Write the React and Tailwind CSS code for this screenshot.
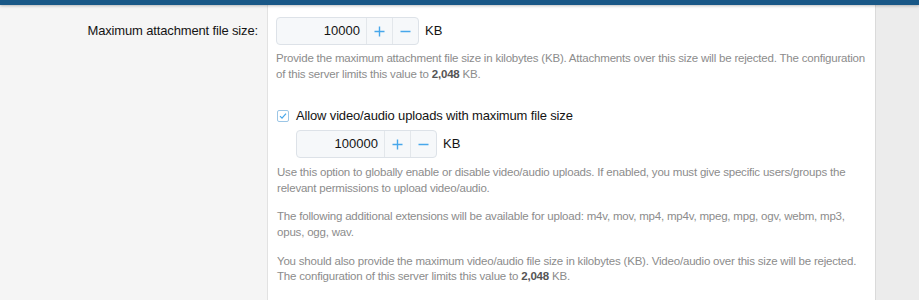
import React from "react";

function Spinner({ value, width }) {
  return (
    <div className="flex items-center">
      <div className="flex h-[28px] rounded-[4px] border border-[#dde2e8] bg-[#f6f8fa] overflow-hidden">
        <div
          className={`${width} flex items-center justify-end pr-[6px] text-[13px] text-[#141414]`}
        >
          {value}
        </div>
        <button className="w-[26px] flex items-center justify-center border-l border-[#e3e7eb]">
          <svg width="11" height="11" viewBox="0 0 11 11">
            <path d="M5.5 0.5v10M0.5 5.5h10" stroke="#47a7eb" strokeWidth="1.4" />
          </svg>
        </button>
        <button className="w-[26px] flex items-center justify-center border-l border-[#e3e7eb]">
          <svg width="11" height="11" viewBox="0 0 11 11">
            <path d="M0.5 5.5h10" stroke="#47a7eb" strokeWidth="1.4" />
          </svg>
        </button>
      </div>
      <span className="ml-[6px] text-[13px] text-[#141414]">KB</span>
    </div>
  );
}

function Hint({ children, className = "" }) {
  return (
    <p
      className={`text-[11.5px] leading-[15.6px] tracking-[-0.2px] text-[#8c8c8c] ${className}`}
    >
      {children}
    </p>
  );
}

export default function App() {
  return (
    <div
      className="w-[919px] h-[300px] overflow-hidden bg-white flex flex-col"
      style={{ fontFamily: '"Liberation Sans", Arial, sans-serif' }}
    >
      <div className="relative z-10 h-[5px] bg-[#195887] shadow-[0_1px_3px_rgba(0,0,0,0.25)]" />
      <div className="flex flex-1">
        <div className="flex-1 flex flex-col">
          {/* row 1 */}
          <div className="flex">
            <div className="w-[268px] shrink-0 bg-[#f5f5f5] border-r border-[#e2e2e2] pt-[12px] pr-[9px] text-right">
              <div className="h-[28px] flex items-center justify-end text-[13px] tracking-[-0.15px] text-[#141414]">
                Maximum attachment file size:
              </div>
            </div>
            <div className="flex-1 pl-[8px] pt-[12px] pb-[13px]">
              <Spinner value="10000" width="w-[89px]" />
              <Hint className="mt-[6px] w-[590px]">
                Provide the maximum attachment file size in kilobytes (KB).
                Attachments over this size will be rejected. The configuration
                of this server limits this value to{" "}
                <b className="font-bold text-[#555]">2,048</b> KB.
              </Hint>
            </div>
          </div>
          {/* row 2 */}
          <div className="flex flex-1">
            <div className="w-[268px] shrink-0 bg-[#f5f5f5] border-r border-[#e2e2e2]" />
            <div className="flex-1 pl-[9px] pt-[12px]">
              <label className="flex items-center h-[17px] text-[13px] tracking-[-0.15px] text-[#141414]">
                <span className="w-[12px] h-[12px] rounded-[2px] border border-[#9cc6e6] bg-white flex items-center justify-center">
                  <svg width="8" height="8" viewBox="0 0 8 8">
                    <path
                      d="M1 4.2l2 2 4-4.6"
                      fill="none"
                      stroke="#47a7eb"
                      strokeWidth="1.2"
                    />
                  </svg>
                </span>
                <span className="ml-[7px]">
                  Allow video/audio uploads with maximum file size
                </span>
              </label>
              <div className="mt-[6px] ml-[19px]">
                <Spinner value="100000" width="w-[87px]" />
              </div>
              <div className="w-[590px]">
                <Hint className="mt-[7px]">
                  Use this option to globally enable or disable video/audio
                  uploads. If enabled, you must give specific users/groups the
                  relevant permissions to upload video/audio.
                </Hint>
                <Hint className="mt-[13px]">
                  The following additional extensions will be available for
                  upload: m4v, mov, mp4, mp4v, mpeg, mpg, ogv, webm, mp3, opus,
                  ogg, wav.
                </Hint>
                <Hint className="mt-[13px]">
                  You should also provide the maximum video/audio file size in
                  kilobytes (KB). Video/audio over this size will be rejected.
                  The configuration of this server limits this value to{" "}
                  <b className="font-bold text-[#555]">2,048</b> KB.
                </Hint>
              </div>
            </div>
          </div>
        </div>
        <div className="w-[44px] shrink-0 bg-[#ececec] border-l border-[#dadada]" />
      </div>
    </div>
  );
}
